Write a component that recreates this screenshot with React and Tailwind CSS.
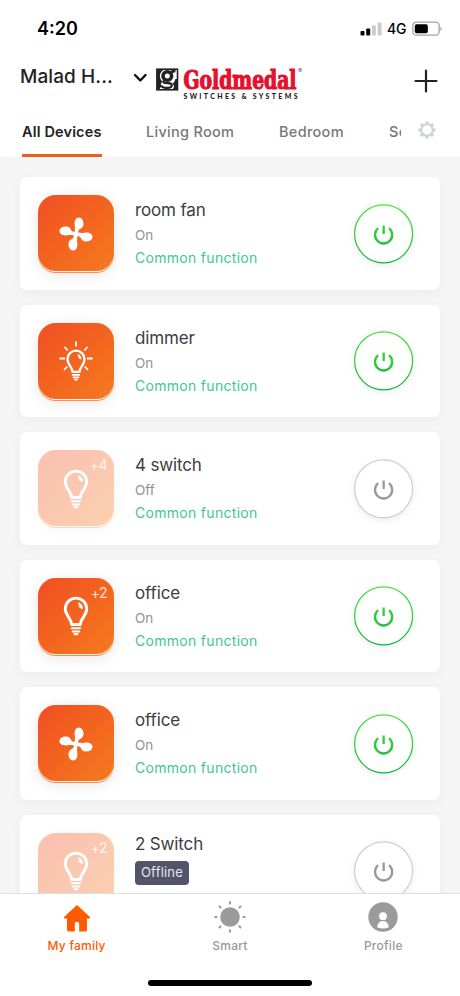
import React from 'react';
import clsx from 'clsx';

const devices = [
  { name: 'room fan', status: 'On', icon: 'fan', on: true },
  { name: 'dimmer', status: 'On', icon: 'dimmer', on: true },
  { name: '4 switch', status: 'Off', icon: 'bulb', on: false, extra: '+4' },
  { name: 'office', status: 'On', icon: 'bulb', on: true, extra: '+2' },
  { name: 'office', status: 'On', icon: 'fan', on: true },
  { name: '2 Switch', status: 'Offline', icon: 'bulb', on: false, extra: '+2', offline: true },
];

function StatusBar() {
  return (
    <div className="flex h-[54px] items-center justify-between pr-[17px] pl-[37px] pt-[3px]">
      <span className="text-[18px] font-semibold text-black">4:20</span>
      <div className="flex items-center">
        <svg width="22" height="14" viewBox="0 0 22 14">
          <rect x="0.5" y="9" width="4" height="4.5" rx="1" fill="#000" />
          <rect x="6.2" y="6.5" width="4" height="7" rx="1" fill="#000" />
          <rect x="11.9" y="3.5" width="4" height="10" rx="1" fill="#ccc" />
          <rect x="17.6" y="0.5" width="4" height="13" rx="1" fill="#ccc" />
        </svg>
        <span className="ml-[5px] w-[20px] text-[14px] font-medium tracking-[-0.2px] text-black">4G</span>
        <svg className="ml-[5px]" width="31" height="16" viewBox="0 0 31 16">
          <rect x="0.8" y="1.2" width="26.4" height="13" rx="3.6" fill="none" stroke="#a3a3a3" strokeWidth="1.3" />
          <rect x="2.8" y="3.2" width="13" height="9" rx="1.8" fill="#000" />
          <path d="M28.5 5.4c1.7.8 1.7 3.8 0 4.6z" fill="#a3a3a3" />
        </svg>
      </div>
    </div>
  );
}

function Logo() {
  return (
    <svg className="overflow-visible" width="150" height="40" viewBox="0 0 150 40">
      <rect x="1.9" y="4.2" width="20.6" height="20.6" fill="#fff" stroke="#222" strokeWidth="1.600" />
      <path d="M2 4h8C6 6 4.500 9 5 12c.3 2 1.200 3.500 2.500 4.500-1.500 1.500-2 3-1 4.200L4 25H2z" fill="#222" />
      <circle cx="12.300" cy="11" r="4.300" fill="none" stroke="#222" strokeWidth="3.600" />
      <path d="M15.500 8.500c.8-2.200 2.500-2.800 5-2.300" fill="none" stroke="#222" strokeWidth="2.800" />
      <path d="M9 15.500c-1.500 2 0 2.500 3.500 2.500 6 0 5.500 5-.5 5-4 0-5.500-1-5-2.500" fill="none" stroke="#222" strokeWidth="2.300" />
      <path d="M22 14v11h-5c2.500-2 2.500-5 .3-6.500C19 17.500 20 16 20.300 14z" fill="#222" />
      <text x="28.500" y="24" fontFamily="'DejaVu Serif Condensed', 'DejaVu Serif', serif" fontSize="25.500" fontWeight="700" fill="#e4102d" stroke="#e4102d" strokeWidth="1.100" textLength="113" lengthAdjust="spacingAndGlyphs">Goldmedal</text>
      <text x="143" y="8" fontFamily="Inter, sans-serif" fontSize="6" fill="#555">®</text>
      <text x="28.500" y="33.500" fontFamily="Lato, sans-serif" fontSize="7" fontWeight="900" fill="#222" textLength="114">SWITCHES &amp; SYSTEMS</text>
    </svg>
  );
}

function Header() {
  return (
    <header className="h-[157px] shrink-0 bg-white">
      <StatusBar />
      <div className="flex h-[54px] items-center pl-5 pr-[22px]">
        <span className="w-[113px] pb-[7px] text-[19px] font-medium tracking-[0.1px] text-[#222]">Malad H...</span>
        <svg className="mb-[7px]" width="14" height="10" viewBox="0 0 14 10" fill="none" stroke="#111" strokeWidth="2.400" strokeLinecap="round" strokeLinejoin="round">
          <path d="M2 2l5.300 5.500L12.500 2" />
        </svg>
        <div className="ml-2 mt-[7px]">
          <Logo />
        </div>
        <svg className="ml-auto" width="24" height="24" viewBox="0 0 24 24" stroke="#222" strokeWidth="2.200" strokeLinecap="round">
          <path d="M12 1.500v21M1.500 12h21" />
        </svg>
      </div>
      <nav className="flex h-[49px] pl-[22px] text-[14.500px] font-medium tracking-[0.300px] text-[#77777b]">
        <div className="flex w-[80px] flex-col justify-between pt-[13px]">
          <span className="whitespace-nowrap font-semibold tracking-[0.150px] leading-[22px] text-[#222]">All Devices</span>
          <div className="h-[3px] bg-[#e8601c]" />
        </div>
        <span className="ml-[44px] w-[89px] whitespace-nowrap pt-[13px] leading-[22px]">Living Room</span>
        <span className="ml-[44px] w-[66px] whitespace-nowrap pt-[13px] leading-[22px]">Bedroom</span>
        <span className="ml-[44px] w-[12px] overflow-hidden pt-[13px] leading-[22px]">Se</span>
        <Gear />
      </nav>
    </header>
  );
}

function Gear() {
  return (
    <svg className="ml-[17px] mt-[13px]" width="18" height="18" viewBox="0 0 18 18" fill="none" stroke="#cfd3d6">
      <circle cx="9" cy="9" r="5.700" strokeWidth="2" />
      {[0, 45, 90, 135, 180, 225, 270, 315].map((a) => (
        <path key={a} d="M9 .4v2.600" strokeWidth="3.200" transform={`rotate(${a} 9 9)`} />
      ))}
    </svg>
  );
}

function Fan() {
  return (
    <svg width="34" height="34" viewBox="-17 -17 34 34" fill="#fff">
      {[0, 90, 180, 270].map((a) => (
        <path key={a} d="M-2 2C-1.600-2-.6-5-1.200-8.500c-.8-4.500 1-8 4-8 3 0 4.800 3 4.700 6.500C7.400-7 6-5.800 4-4.900 2.400-4 1.800-2.500 2 2z" transform={`rotate(${a})`} />
      ))}
    </svg>
  );
}

function Bulb({ small }) {
  return (
    <svg width={small ? 22 : 26} height={small ? 32 : 40} viewBox="0 0 26 40" fill="none" stroke="#fff" strokeLinecap="round">
      <path d="M8.500 28.500C8.500 22 2.300 20 2.300 12.800a10.700 10.700 0 0 1 21.400 0C23.700 20 17.500 22 17.500 28.500z" strokeWidth="2.900" strokeLinejoin="round" />
      <path d="M16 7c2.200.8 3.400 2.800 3.400 5.500L17 11.500z" fill="#fff" strokeWidth="1" />
      <path d="M8.800 32.300h8.400M9.800 35.500h6.400" strokeWidth="2.100" />
      <path d="M11.700 38.200h2.600" strokeWidth="2.200" />
    </svg>
  );
}

function Dimmer() {
  return (
    <div className="relative flex h-[40px] w-[34px] items-end justify-center">
      <svg className="absolute left-0 top-0" width="34" height="34" viewBox="0 0 34 34" stroke="#fff" strokeWidth="1.800">
        <path d="M17 .5v5M.5 17.500h5.500M28 17.500h5.500M5.500 6l3.300 3.500M28.500 6l-3.300 3.500M5 29l3.300-3.500M29 29l-3.300-3.500" />
      </svg>
      <Bulb small />
    </div>
  );
}

function Tile({ on }) {
  return (
    <div className={clsx('h-[78px] w-[76px] rounded-[18px] bg-[#f68b50] shadow-[0_2px_14px_rgba(0,0,0,0.10)]', !on && 'opacity-35')}>
      <div className="h-[77px] rounded-[18px] bg-[#fff3ea]">
        <div className="h-[76px] rounded-[18px] bg-linear-to-br from-[#f04e23] via-[#f3641f] to-[#f57a20]" />
      </div>
    </div>
  );
}

function DeviceIcon({ icon, on, extra }) {
  return (
    <div className="relative h-[78px] w-[76px] shrink-0">
      <Tile on={on} />
      <div className="absolute inset-0 flex items-center justify-center pb-px">
        {icon === 'fan' && <Fan />}
        {icon === 'bulb' && <Bulb />}
        {icon === 'dimmer' && <Dimmer />}
      </div>
      {extra && <span className="absolute right-[7px] top-[5px] text-[14px] leading-5 tracking-[-0.500px] text-white/80">{extra}</span>}
    </div>
  );
}

function PowerButton({ on, id }) {
  const color = on ? `url(#${id})` : '#999';
  return (
    <svg className="shrink-0 overflow-visible rounded-full drop-shadow-[0_2px_3px_rgba(0,0,0,0.08)]" width="60" height="60" viewBox="0 0 60 60" fill="none">
      <defs>
        <linearGradient id={id} gradientUnits="userSpaceOnUse" x1="30" y1="0" x2="30" y2="60">
          <stop offset="0" stopColor="#4be337" />
          <stop offset="1" stopColor="#08b63c" />
        </linearGradient>
      </defs>
      <circle cx="29.600" cy="29.800" r="29" fill="#fff" stroke={on ? `url(#${id})` : '#cfcfcf'} strokeWidth="1.200" />
      <path d="M24.200 24.200a8.600 8.600 0 1 0 10.800 0" stroke={color} strokeWidth="2.300" />
      <rect x="28.500" y="21.500" width="2.300" height="8.500" fill={color} />
    </svg>
  );
}

function DeviceCard({ device, index }) {
  const { name, status, icon, on, extra, offline } = device;
  return (
    <div className="flex h-[112.500px] shrink-0 rounded-[7px] bg-white pl-[18px] pr-[26px] shadow-[0_3px_12px_rgba(0,0,0,0.04)]">
      <div className="pt-[18px]">
        <DeviceIcon icon={icon} on={on} extra={extra} />
      </div>
      <div className={clsx('ml-[21px] flex-1', offline ? 'pt-[17px]' : 'pt-[21px]')}>
        <div className="text-[17px] leading-6 tracking-[-0.150px] text-[#3d3d3f]">{name}</div>
        {offline ? (
          <span className="mt-[5px] flex h-6 w-[54px] items-center justify-center rounded-[4px] bg-[#53536a] text-[13px] tracking-[0.200px] text-white/85">{status}</span>
        ) : (
          <>
            <div className="mt-px text-[13.500px] leading-6 text-[#929294]">{status}</div>
            <div className="-mt-px text-[14px] leading-[23px] tracking-[0.300px] text-[#3fc694]">Common function</div>
          </>
        )}
      </div>
      <div className="pt-[26.500px]">
        <PowerButton on={on} id={`power-${index}`} />
      </div>
    </div>
  );
}

function TabBar() {
  return (
    <footer className="shrink-0 border-t border-[#dedede] bg-white">
      <div className="grid h-[86px] grid-cols-3 text-[12px] font-medium tracking-[0.250px] text-[#999]">
        <div className="flex flex-col items-center pt-[8px] text-[#ff5a00]">
          <svg width="30" height="32" viewBox="0 0 30 32" fill="currentColor">
            <path d="M15 3L28 15q.5 1.500-1 1.500h-2V28q0 1.500-1.500 1.500h-6.300V22q0-2.200-2.200-2.200T12.800 22v7.500H6.500Q5 29.500 5 28V16.500H3Q1.500 16.500 2 15z" />
          </svg>
          <span className="mt-[4px] leading-4">My family</span>
        </div>
        <div className="flex flex-col items-center pt-[7px]">
          <svg width="32" height="32" viewBox="0 0 32 32" fill="#9b9b9b" stroke="#9b9b9b">
            <circle cx="16" cy="16" r="9.800" stroke="none" />
            {[0, 45, 90, 135, 180, 225, 270, 315].map((a) => (
              <path key={a} d="M16 1.200v1.400" strokeWidth="2.100" strokeLinecap="round" transform={`rotate(${a} 16 16)`} />
            ))}
          </svg>
          <span className="mt-[5px] leading-4">Smart</span>
        </div>
        <div className="flex flex-col items-center pt-[8px]">
          <svg width="32" height="32" viewBox="0 0 32 32">
            <circle cx="16" cy="15" r="14.700" fill="#9b9b9b" />
            <circle cx="16" cy="14.200" r="3.900" fill="#fff" />
            <path d="M10.300 25.500c0-4 2.300-6.500 5.700-6.500s5.700 2.500 5.700 6.500q-5.700 1.800-11.400 0z" fill="#fff" />
          </svg>
          <span className="mt-[4px] leading-4">Profile</span>
        </div>
      </div>
      <div className="mx-auto mb-[10px] h-[6px] w-[164px] rounded-full bg-black" />
    </footer>
  );
}

export default function App() {
  return (
    <div className="flex h-[996px] w-[460px] flex-col overflow-hidden bg-[#f5f5f5] font-['Inter',sans-serif]">
      <Header />
      <main className="flex min-h-0 flex-1 flex-col gap-[15px] overflow-hidden px-5 pt-5">
        {devices.map((device, i) => (
          <DeviceCard key={i} device={device} index={i} />
        ))}
      </main>
      <TabBar />
    </div>
  );
}
